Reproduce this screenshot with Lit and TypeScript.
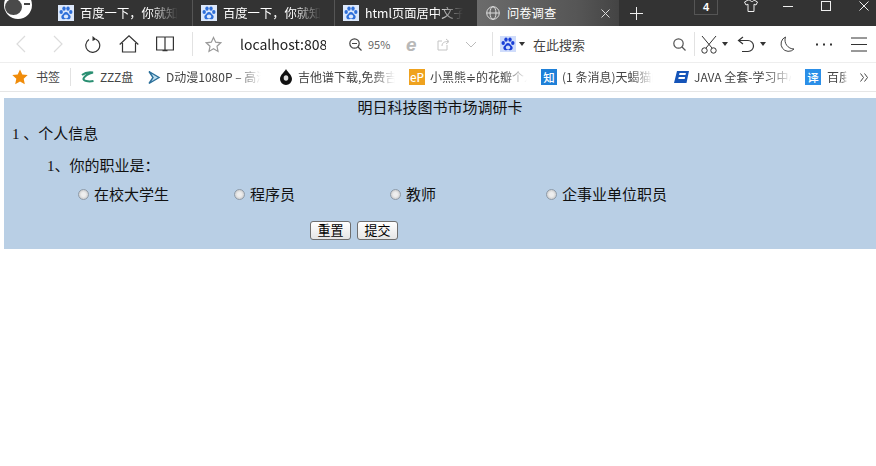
import { LitElement, html, css, svg } from "lit";
import { customElement } from "lit/decorators.js";

const paw = (fg: string, bg: string) => html`<svg class="i16" viewBox="0 0 16 16">
  <rect width="16" height="16" fill="${bg}"/>
  <g fill="${fg}">
    <ellipse cx="3.2" cy="7" rx="1.7" ry="2.1"/><ellipse cx="6" cy="3.6" rx="1.7" ry="2.2"/>
    <ellipse cx="10" cy="3.6" rx="1.7" ry="2.2"/><ellipse cx="12.8" cy="7" rx="1.7" ry="2.1"/>
    <path d="M8 7c-2 0-2.5 2-4 3.2C2.6 11.5 3.5 14.5 6 14.3c1-.1 1.5-.3 2-.3s1 .2 2 .3c2.5.2 3.4-2.8 2-4.1C10.5 9 10 7 8 7z"/>
  </g>
  <ellipse cx="8" cy="11.5" rx="2.2" ry="1.9" fill="${bg}"/>
</svg>`;

const stroke = (w: number, h: number, body: unknown, color = "#333", sw = 1.2) =>
  html`<svg width="${w}" height="${h}" viewBox="0 0 ${w} ${h}" fill="none" stroke="${color}" stroke-width="${sw}">${body}</svg>`;

const caret = html`<svg width="6" height="4" viewBox="0 0 6 4"><path d="M0 0h6L3 4z" fill="#333"/></svg>`;

interface Item { m: number; c: unknown }

const toolbar: Item[] = [
  { m: 15, c: stroke(11, 18, svg`<path d="M10 1L2 9l8 8"/>`, "#dcdcdc") },
  { m: 27, c: stroke(11, 18, svg`<path d="M1 1l8 8-8 8"/>`, "#dcdcdc") },
  { m: 21, c: stroke(17, 18, svg`<path d="M11 4.2A7 7 0 1 1 4 4.5"/><path d="M7.5 1l3.8 3.2L7.5 6z" fill="#333" stroke="none"/>`) },
  { m: 17, c: stroke(20, 18, svg`<path d="M.7 9.5L10 .8l9.3 8.7M3.5 8v9h13V8"/>`) },
  { m: 17, c: stroke(18, 16, svg`<path d="M.6 1h7.8c.4 0 .6.3.6.7V14H.6zM17.4 1H9.6c-.4 0-.6.3-.6.7V14h8.4zM6.5 14.6h5"/>`) },
  { m: 18, c: html`<span class="vsep"></span>` },
  { m: 12, c: stroke(17, 17, svg`<path d="M8.5 1.5l2.2 4.7 5 .6-3.7 3.5 1 5.1-4.5-2.6-4.5 2.6 1-5.1L1.3 6.800l5-.6z"/>`, "#999") },
  { m: 18, c: html`<span class="url">localhost:808</span>` },
  { m: 23, c: stroke(13, 13, svg`<circle cx="5.5" cy="5.5" r="4.7"/><path d="M9 9l3.5 3.5M3 5.5h5"/>`, "#444") },
  { m: 6, c: html`<span class="pct">95%</span>` },
  { m: 17, c: html`<span class="ie">e</span>` },
  { m: 17, c: stroke(13, 13, svg`<path d="M10 7v5H1V3h4M5 8c0-3 2-4.5 6-4.5M9 1l3 2.5L9 6"/>`, "#c4c4c4", 1) },
  { m: 15, c: stroke(12, 7, svg`<path d="M1 1l5 5 5-5"/>`, "#bbb", 1) },
  { m: 15, c: html`<span class="vsep"></span>` },
  { m: 7, c: paw("#1a3fd6", "#cfdcfb") },
  { m: 3, c: caret },
  { m: 8, c: html`<span class="search">在此搜索</span>` },
  { m: 88, c: stroke(13, 13, svg`<circle cx="5.5" cy="5.5" r="4.7"/><path d="M9 9l3.5 3.5"/>`, "#555") },
  { m: 8, c: html`<span class="vsep"></span>` },
  { m: 6, c: stroke(16, 19, svg`<path d="M1 1l10 12M15 1L5 13"/><circle cx="3.5" cy="15.5" r="2.7"/><circle cx="12.5" cy="15.5" r="2.7"/>`, "#333", 1) },
  { m: 5, c: caret },
  { m: 9, c: stroke(18, 17, svg`<path d="M2 4.5h9a5.5 5.5 0 0 1 0 11H5"/><path d="M6 1L1.5 4.5 6 8" />`) },
  { m: 5, c: caret },
  { m: 13, c: stroke(16, 17, svg`<path d="M6.5 1A7.5 7.5 0 1 0 15 13 9 9 0 0 1 6.5 1z"/>`, "#444", 1) },
  { m: 21, c: html`<svg width="16" height="3" viewBox="0 0 16 3"><g fill="#333"><rect y=".5" width="2" height="2"/><rect x="7" y=".5" width="2" height="2"/><rect x="14" y=".5" width="2" height="2"/></g></svg>` },
  { m: 19, c: stroke(16, 15, svg`<path d="M0 1h16M0 7.5h16M0 14h16"/>`, "#333", 1) },
];

const letter = (t: string, bg: string) => html`<span class="letter" style="background:${bg}">${t}</span>`;

const bookmarks: Item[] = [
  { m: 12, c: html`<svg class="i16" viewBox="0 0 16 16"><path d="M8 .5l2.3 5 5.4.6-4 3.7 1.1 5.4L8 12.5l-4.800 2.7 1.1-5.400-4-3.700 5.400-.6z" fill="#f08c0a"/></svg>` },
  { m: 8, c: html`<span class="bm w24">书签</span>` },
  { m: 10, c: html`<span class="vsep short"></span>` },
  { m: 10, c: html`<svg width="14" height="15" viewBox="0 0 14 15" fill="none"><path d="M1 5c3-2.500 8-3 11-2.500C8 3.500 4 5.500 2.500 8.500c-.8 2.500 5 3.500 10 2.500" stroke="#2a8f72" stroke-width="2"/></svg>` },
  { m: 5, c: html`<span class="bm w34">ZZZ盘</span>` },
  { m: 13, c: html`<svg width="14" height="15" viewBox="0 0 14 15" fill="none"><path d="M2 1.500l10 6-10 6 4-6z" fill="#bfe0f0" stroke="#2b6f9a" stroke-width="1.4"/></svg>` },
  { m: 5, c: html`<span class="bm w95 fade">D动漫1080P – 高清</span>` },
  { m: 17, c: html`<svg class="i16" viewBox="0 0 16 16"><path d="M8 0c1.500 3 6 6 6 10a6 6 0 0 1-12 0C2 6 6.500 3 8 0z" fill="#111"/><ellipse cx="8" cy="9" rx="2.3" ry="2.8" fill="#ddd"/></svg>` },
  { m: 4, c: html`<span class="bm w97 fade">吉他谱下载,免费吉他谱</span>` },
  { m: 14, c: letter("eP", "#efa21e") },
  { m: 5, c: html`<span class="bm w97 fade">小黑熊≑的花瓣个人主页</span>` },
  { m: 14, c: letter("知", "#1f80d8") },
  { m: 5, c: html`<span class="bm w91 fade">(1 条消息)天蝎猫的博客</span>` },
  { m: 20, c: html`<svg class="i16" viewBox="0 0 16 16"><path d="M4 2h12l-2.500 12H1zM6.500 4l-.4 2h6.400l.4-2zM5.700 8l-.4 2h6.400l.4-2z" fill="#1554b8" fill-rule="evenodd"/></svg>` },
  { m: 5, c: html`<span class="bm w98 fade">JAVA 全套-学习中心</span>` },
  { m: 13, c: letter("译", "#2b8fe8") },
  { m: 6, c: html`<span class="bm w20 fade">百度翻译</span>` },
  { m: 13, c: stroke(8, 9, svg`<path d="M.5.5l3 4-3 4M4.5.5l3 4-3 4"/>`, "#444", 1) },
];

@customElement("app-root")
export class AppRoot extends LitElement {
  static styles = css`
    :host { display: block; width: 876px; height: 466px; overflow: hidden; background: #fff;
      font-family: "Noto Sans CJK SC", "Liberation Sans", sans-serif; color: #000; }
    .tabs { height: 26px; background: #333; display: flex; position: relative; color: #fff; font-size: 12.3px; }
    .avatar { position: absolute; left: 4px; top: -9px; width: 28px; height: 28px; border-radius: 50%; background: #fff; overflow: hidden; }
    .avatar i { position: absolute; left: 1px; top: 8px; width: 17px; height: 16px; border-radius: 50%; background: #4a4a4a; }
    .avatar b { position: absolute; left: 20px; top: 12px; width: 6px; height: 2px; background: #444; }
    .tab { height: 26px; display: flex; align-items: center; box-sizing: border-box; flex: none; }
    .t1 { margin-left: 58px; width: 135px; border-right: 1px solid #555; }
    .t2 { margin-left: 8px; width: 134px; border-right: 1px solid #555; }
    .t3 { margin-left: 8px; width: 134px; }
    .active { width: 142px; background: linear-gradient(90deg, #6b6b6b, #565656 70%, #444); padding-left: 9px; }
    .tab .title { margin-left: 6px; width: 98px; white-space: nowrap; overflow: hidden; line-height: 26px;
      -webkit-mask-image: linear-gradient(90deg, #000 72%, transparent); mask-image: linear-gradient(90deg, #000 72%, transparent); }
    .active .title { width: 50px; margin-left: 7px; -webkit-mask-image: none; mask-image: none; }
    .tab .close { margin-left: 44px; display: flex; }
    .plus { margin-left: 11px; align-self: center; display: flex; }
    .count { margin-left: 51px; width: 24px; height: 15px; box-sizing: border-box; border: 1px solid #555; border-top: 0;
      display: flex; align-items: center; justify-content: center; font: 700 11px "Liberation Sans", sans-serif; }
    .ctl { display: flex; align-self: flex-start; }
    .shirt { margin-left: 26px; }
    .min { margin-left: 25px; margin-top: 6px; }
    .max { margin-left: 28px; margin-top: 1px; }
    .cls { margin-left: 28px; margin-top: 1px; }
    .i16 { width: 16px; height: 16px; display: block; flex: none; }
    .bar { display: flex; align-items: center; box-sizing: border-box; }
    .cell { flex: none; display: flex; align-items: center; }
    .tools { height: 36px; color: #333; }
    .vsep { display: block; width: 1px; height: 24px; background: #e2e2e2; }
    .vsep.short { height: 18px; }
    .url { width: 86px; font-size: 14px; color: #222; white-space: nowrap; overflow: hidden;
      -webkit-mask-image: linear-gradient(90deg, #000 80%, #888); mask-image: linear-gradient(90deg, #000 80%, #888); }
    .pct { font-size: 11px; width: 21px; color: #666; }
    .ie { width: 14px; font: italic 700 19px/17px "Liberation Sans", sans-serif; color: #b8b8b8; }
    .search { font-size: 13px; width: 52px; color: #444; }
    .marks { height: 30px; border-top: 1px solid #eee; border-bottom: 1px solid #e6e6e6; }
    .bm { font-size: 12px; color: #444; white-space: nowrap; overflow: hidden; line-height: 18px; }
    .fade { -webkit-mask-image: linear-gradient(90deg, #000 75%, transparent); mask-image: linear-gradient(90deg, #000 75%, transparent); }
    .w24 { width: 24px; } .w34 { width: 34px; } .w95 { width: 95px; } .w97 { width: 97px; }
    .w91 { width: 91px; } .w98 { width: 98px; } .w20 { width: 20px; }
    .letter { width: 16px; height: 16px; display: flex; align-items: center; justify-content: center;
      color: #fff; font-size: 11.5px; font-weight: 500; line-height: 16px; }
    .panel { margin: 6px 0 0 4px; height: 151px; background: #b9cfe5; box-sizing: border-box; font-size: 15px; line-height: 20px;
      font-family: "Liberation Serif", "Noto Sans CJK SC", serif; color: #111; }
    .heading { text-align: center; height: 20px; }
    .section { margin: 6px 0 0 8px; }
    .question { margin: 12px 0 0 43px; }
    .options { margin: 9px 0 0 74px; display: grid; grid-template-columns: repeat(4, 156px); }
    .opt { display: flex; align-items: center; }
    .radio { width: 11px; height: 11px; margin: 0 5px 1px 0; border-radius: 50%; box-sizing: border-box; border: 1px solid #8f9ba8;
      background: radial-gradient(circle at 50% 50%, #eee 30%, #bdbdbd 100%); }
    .btns { margin: 16px 0 0 306px; display: flex; gap: 6px; }
    .btn { width: 41px; height: 19px; padding: 0 0 2px; border: 1px solid #6f6f6f; border-radius: 3px; box-sizing: border-box;
      background: linear-gradient(#fff, #e6e6e6); font: 13px/15px "Noto Sans CJK SC", sans-serif; color: #000; }
  `;

  private row(items: Item[]) {
    return items.map((it) => html`<span class="cell" style="margin-left:${it.m}px">${it.c}</span>`);
  }

  render() {
    const x = (n: number, c = "#ddd") => stroke(n, n, svg`<path d="M.5.5L${n - 0.5} ${n - 0.5}M${n - 0.5} .5L.5 ${n - 0.5}"/>`, c, 1);
    const baidu = paw("#2f6fd8", "#dce8fb");
    return html`
      <div class="tabs">
        <div class="avatar"><i></i><b></b></div>
        <div class="tab t1">${baidu}<span class="title">百度一下，你就知道</span></div>
        <div class="tab t2">${baidu}<span class="title">百度一下，你就知道</span></div>
        <div class="tab t3">${baidu}<span class="title">html页面居中文子</span></div>
        <div class="tab active">
          ${stroke(14, 14, svg`<circle cx="7" cy="7" r="6.3"/><ellipse cx="7" cy="7" rx="3" ry="6.3"/><path d="M.7 7h12.6"/>`, "#ddd", 1)}
          <span class="title">问卷调查</span>
          <span class="close">${x(9)}</span>
        </div>
        <span class="plus">${stroke(13, 13, svg`<path d="M6.5 0v13M0 6.5h13"/>`, "#eee", 1)}</span>
        <span class="count">4</span>
        <span class="ctl shirt">${stroke(14, 12, svg`<path d="M4 0L.5 2 2 5l2-.8V11.5h6V4.2L12 5l1.5-3L10 0c-.5 2-3.5 2-4 0z"/>`, "#eee", 1)}</span>
        <span class="ctl min">${stroke(10, 1, svg`<path d="M0 .5h10"/>`, "#eee", 1)}</span>
        <span class="ctl max">${stroke(10, 10, svg`<rect x=".5" y=".5" width="9" height="9"/>`, "#eee", 1)}</span>
        <span class="ctl cls">${x(10, "#eee")}</span>
      </div>
      <div class="bar tools">${this.row(toolbar)}</div>
      <div class="bar marks">${this.row(bookmarks)}</div>
      <form class="panel">
        <div class="heading">明日科技图书市场调研卡</div>
        <div class="section">1 、个人信息</div>
        <div class="question">1、你的职业是：</div>
        <div class="options">
          ${["在校大学生", "程序员", "教师", "企事业单位职员"].map(
            (o) => html`<label class="opt"><span class="radio"></span>${o}</label>`
          )}
        </div>
        <div class="btns"><button type="button" class="btn">重置</button><button type="button" class="btn">提交</button></div>
      </form>
    `;
  }
}
